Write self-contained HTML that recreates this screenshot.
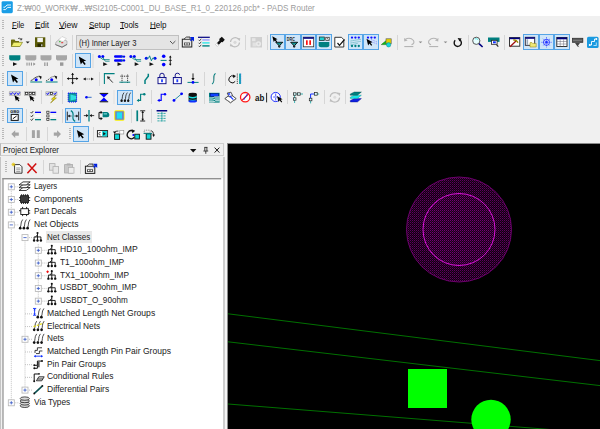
<!DOCTYPE html><html><head><meta charset="utf-8"><title>PADS Router</title><style>
*{margin:0;padding:0;box-sizing:border-box}
html,body{width:600px;height:429px;overflow:hidden;background:#f0f0f0}
body{position:relative;font-family:"Liberation Sans","NanumGothic",sans-serif;font-size:9px;color:#000}
.abs{position:absolute;white-space:nowrap}
.tx{transform-origin:0 50%;line-height:12px;height:12px}
#title{left:0;top:0;width:600px;height:16px;background:#fff}
.ti{font-size:9.2px;color:#9c9c9c}
.mn{font-size:9.2px;color:#111}
.mn u{text-decoration:underline;text-underline-offset:0.4px;text-decoration-thickness:0.7px}
.sel{background:#cfe5f8;border:1px solid #55a4e6}
.sep{width:1px;background:#d6d6d6}
.grip{width:2px;background-image:repeating-linear-gradient(#b8b8b8 0 1px,transparent 1px 2px)}
#combo{left:76px;top:35px;width:103px;height:15px;background:#e4e4e4;border:1px solid #c0c0c0}
.cb{font-size:8.8px;color:#222}
#pe-head{left:0;top:143px;width:224px;height:13px;border:1px solid #cfcfcf;border-left-color:#b8b8b8;background:#f0f0f0}
.ph{font-size:9px;color:#222}
#tree{left:3px;top:178px;width:220px;height:260px;background:#fff}
#lstrip{left:0;top:157px;width:1px;height:280px;background:#c4c4c4}
#rstrip{left:223px;top:157px;width:2px;height:280px;background:#cdcdcd}
.t{font-size:9.4px;color:#222}
#canvas{left:227px;top:143px;width:380px;height:300px;background:#000;border-left:1px solid #8a8a8a;border-top:1px solid #8a8a8a}
#split{left:225px;top:143px;width:2px;height:290px;background:#f4f4f4}
svg{position:absolute;left:0;top:0;overflow:visible}
</style></head><body>
<div id="title" class="abs"></div>
<span id="ti" class="abs tx ti" style="left:16.5px;top:2.30px;transform:scaleX(0.8774)">Z:₩00_WORK₩...₩SI2105-C0001_DU_BASE_R1_0_220126.pcb* - PADS Router</span>
<span id="m0" class="abs tx mn" style="left:12.2px;top:18.60px;transform:scaleX(0.8362)"><u>F</u>ile</span>
<span id="m1" class="abs tx mn" style="left:35.1px;top:18.60px;transform:scaleX(0.8891)"><u>E</u>dit</span>
<span id="m2" class="abs tx mn" style="left:59.4px;top:18.60px;transform:scaleX(0.9410)"><u>V</u>iew</span>
<span id="m3" class="abs tx mn" style="left:88.5px;top:18.60px;transform:scaleX(0.8739)"><u>S</u>etup</span>
<span id="m4" class="abs tx mn" style="left:120px;top:18.60px;transform:scaleX(0.8670)"><u>T</u>ools</span>
<span id="m5" class="abs tx mn" style="left:150px;top:18.60px;transform:scaleX(0.8727)"><u>H</u>elp</span>
<div class="abs sel" style="left:270px;top:34px;width:15px;height:16px"></div>
<div class="abs sel" style="left:285px;top:34px;width:16px;height:16px"></div>
<div class="abs sel" style="left:301px;top:34px;width:15px;height:16px"></div>
<div class="abs sel" style="left:316px;top:34px;width:16px;height:16px"></div>
<div class="abs sel" style="left:348px;top:34px;width:15px;height:16px"></div>
<div class="abs sel" style="left:363px;top:34px;width:16px;height:16px"></div>
<div class="abs sel" style="left:523px;top:34px;width:16px;height:16px"></div>
<div class="abs sel" style="left:539px;top:34px;width:15px;height:16px"></div>
<div class="abs sel" style="left:554px;top:34px;width:16px;height:16px"></div>
<div class="abs sel" style="left:75px;top:53px;width:16px;height:15px"></div>
<div class="abs sel" style="left:7px;top:71px;width:16px;height:15px"></div>
<div class="abs sel" style="left:117px;top:90px;width:16px;height:15px"></div>
<div class="abs sel" style="left:7px;top:108px;width:16px;height:15px"></div>
<div class="abs sel" style="left:65px;top:108px;width:16px;height:15px"></div>
<div class="abs sel" style="left:73px;top:126px;width:16px;height:16px"></div>
<div class="abs sep" style="left:50.0px;top:35px;height:15px"></div>
<div class="abs sep" style="left:71.5px;top:35px;height:15px"></div>
<div class="abs sep" style="left:245.0px;top:35px;height:15px"></div>
<div class="abs sep" style="left:266.5px;top:35px;height:15px"></div>
<div class="abs sep" style="left:397.0px;top:35px;height:15px"></div>
<div class="abs sep" style="left:467.5px;top:35px;height:15px"></div>
<div class="abs sep" style="left:504.0px;top:35px;height:15px"></div>
<div class="abs sep" style="left:72.0px;top:54px;height:14px"></div>
<div class="abs sep" style="left:25.5px;top:72px;height:14px"></div>
<div class="abs sep" style="left:62.0px;top:72px;height:14px"></div>
<div class="abs sep" style="left:98.5px;top:72px;height:14px"></div>
<div class="abs sep" style="left:135.5px;top:72px;height:14px"></div>
<div class="abs sep" style="left:203.5px;top:72px;height:14px"></div>
<div class="abs sep" style="left:224.5px;top:72px;height:14px"></div>
<div class="abs sep" style="left:40.5px;top:90px;height:14px"></div>
<div class="abs sep" style="left:62.0px;top:90px;height:14px"></div>
<div class="abs sep" style="left:150.5px;top:90px;height:14px"></div>
<div class="abs sep" style="left:203.5px;top:90px;height:14px"></div>
<div class="abs sep" style="left:287.0px;top:90px;height:14px"></div>
<div class="abs sep" style="left:324.0px;top:90px;height:14px"></div>
<div class="abs sep" style="left:345.0px;top:90px;height:14px"></div>
<div class="abs sep" style="left:25.5px;top:109px;height:14px"></div>
<div class="abs sep" style="left:61.5px;top:109px;height:14px"></div>
<div class="abs sep" style="left:130.5px;top:109px;height:14px"></div>
<div class="abs sep" style="left:151.0px;top:109px;height:14px"></div>
<div class="abs sep" style="left:25.5px;top:127px;height:14px"></div>
<div class="abs sep" style="left:46.5px;top:127px;height:14px"></div>
<div class="abs sep" style="left:92.5px;top:127px;height:14px"></div>
<div class="abs sep" style="left:43.0px;top:160px;height:14px"></div>
<div class="abs sep" style="left:80.0px;top:160px;height:14px"></div>
<div class="abs grip" style="left:2px;top:20px;height:9px"></div>
<div class="abs grip" style="left:2px;top:37px;height:11px"></div>
<div class="abs grip" style="left:2px;top:55px;height:11px"></div>
<div class="abs grip" style="left:2px;top:73px;height:11px"></div>
<div class="abs grip" style="left:2px;top:91px;height:11px"></div>
<div class="abs grip" style="left:2px;top:110px;height:11px"></div>
<div class="abs grip" style="left:2px;top:128px;height:11px"></div>
<div class="abs grip" style="left:69px;top:128px;height:11px"></div>
<div class="abs grip" style="left:5px;top:161px;height:12px"></div>
<div id="combo" class="abs"></div>
<span id="cb" class="abs tx cb" style="left:79px;top:36.80px;transform:scaleX(0.8647)">(H) Inner Layer 3</span>
<div id="pe-head" class="abs"></div>
<span id="ph" class="abs tx ph" style="left:3px;top:144.10px;transform:scaleX(0.8746)">Project Explorer</span>
<div id="tree" class="abs"></div><div id="lstrip" class="abs"></div><div id="rstrip" class="abs"></div>
<div id="split" class="abs"></div>
<div id="canvas" class="abs"></div>
<div class="abs" style="left:46px;top:231px;width:46px;height:12px;background:#e9e9e9"></div>
<span id="t0" class="abs tx t" style="left:33.8px;top:179.80px;transform:scaleX(0.8244)">Layers</span>
<span id="t1" class="abs tx t" style="left:33.8px;top:192.51px;transform:scaleX(0.9162)">Components</span>
<span id="t2" class="abs tx t" style="left:33.8px;top:205.21px;transform:scaleX(0.8758)">Part Decals</span>
<span id="t3" class="abs tx t" style="left:33.8px;top:217.92px;transform:scaleX(0.9074)">Net Objects</span>
<span id="t4" class="abs tx t" style="left:47.3px;top:230.62px;transform:scaleX(0.8547)">Net Classes</span>
<span id="t5" class="abs tx t" style="left:60.3px;top:243.33px;transform:scaleX(0.9146)">HD10_100ohm_IMP</span>
<span id="t6" class="abs tx t" style="left:60.3px;top:256.04px;transform:scaleX(0.8926)">T1_100ohm_IMP</span>
<span id="t7" class="abs tx t" style="left:60.3px;top:268.74px;transform:scaleX(0.8820)">TX1_100ohm_IMP</span>
<span id="t8" class="abs tx t" style="left:60.3px;top:281.45px;transform:scaleX(0.8761)">USBDT_90ohm_IMP</span>
<span id="t9" class="abs tx t" style="left:60.3px;top:294.15px;transform:scaleX(0.8660)">USBDT_O_90ohm</span>
<span id="t10" class="abs tx t" style="left:47.3px;top:306.86px;transform:scaleX(0.9187)">Matched Length Net Groups</span>
<span id="t11" class="abs tx t" style="left:47.3px;top:319.57px;transform:scaleX(0.8878)">Electrical Nets</span>
<span id="t12" class="abs tx t" style="left:47.3px;top:332.27px;transform:scaleX(0.8791)">Nets</span>
<span id="t13" class="abs tx t" style="left:47.3px;top:344.98px;transform:scaleX(0.9113)">Matched Length Pin Pair Groups</span>
<span id="t14" class="abs tx t" style="left:47.3px;top:357.68px;transform:scaleX(0.8907)">Pin Pair Groups</span>
<span id="t15" class="abs tx t" style="left:47.3px;top:370.39px;transform:scaleX(0.9043)">Conditional Rules</span>
<span id="t16" class="abs tx t" style="left:47.3px;top:383.10px;transform:scaleX(0.9066)">Differential Pairs</span>
<span id="t17" class="abs tx t" style="left:33.8px;top:395.80px;transform:scaleX(0.8866)">Via Types</span>
<svg width="600" height="429" viewBox="0 0 600 429">
<defs><clipPath id="cv"><rect x="228" y="144" width="372" height="285"/></clipPath><pattern id="chk" width="2" height="2" patternUnits="userSpaceOnUse"><rect width="2" height="2" fill="#100010"/><rect width="1" height="1" fill="#600060"/><rect x="1" y="1" width="1" height="1" fill="#380038"/></pattern><pattern id="chk2" width="2" height="2" patternUnits="userSpaceOnUse"><rect width="2" height="2" fill="#160016"/><rect width="1" height="1" fill="#740074"/><rect x="1" y="1" width="1" height="1" fill="#480048"/></pattern></defs>
<g clip-path="url(#cv)">
<circle cx="459" cy="229.5" r="52.5" fill="url(#chk)" stroke="#800080" stroke-width="0.8"/>
<circle cx="459" cy="229.5" r="36" fill="url(#chk2)" stroke="#d614d6" stroke-width="1"/>
<line x1="228" y1="313.8" x2="600" y2="360.6" stroke="#007000" stroke-width="1"/>
<line x1="228" y1="341.8" x2="600" y2="385.6" stroke="#007000" stroke-width="1"/>
<line x1="228" y1="404" x2="560" y2="430.3" stroke="#007000" stroke-width="1"/>
<rect x="408" y="369" width="39" height="39" fill="#00ff00"/>
<circle cx="491" cy="419.5" r="19.7" fill="#00ff00"/>
</g>
<rect x="1.6" y="1.2" width="11.2" height="12" fill="#1b9ee6" rx="1.4"/>
<path d="M3.4 9.6 L5.6 9.6 L7.6 7.4 L11 7.4 M3.4 7.2 L5 7.2 L7 5 L11 5" fill="none" stroke="#fff" stroke-width="0.9" />
<path d="M11 40 L11 46.5 L19 46.5 L19 41 L15.5 41 L14.5 39.5 L11.5 39.5Z" fill="#6e6e10" stroke="none" stroke-width="1" />
<path d="M11.3 46.5 L13.5 42.3 L22.5 42.3 L20 46.5Z" fill="#f0f070" stroke="#6e6e10" stroke-width="0.6" />
<path d="M18 38.5 Q20 37.5 21.5 39.5 M21.8 38 L21.6 40 L19.8 39.6" fill="none" stroke="#222" stroke-width="0.7" />
<path d="M25.7 41.6 L29.7 41.6 L27.7 43.6Z" fill="#222" stroke="none" stroke-width="1" />
<rect x="35" y="37.3" width="10.3" height="9.8" fill="#5c5c08" />
<rect x="37.3" y="37.8" width="5.6" height="4.3" fill="#f4f4f4" />
<rect x="37.5" y="43.6" width="5.2" height="3.3" fill="#2a2a00" />
<rect x="41.2" y="44.3" width="1.2" height="2" fill="#e0e0e0" />
<path d="M56 42 L60.5 38.5 L67 41 L67 44.5 L62 47.3 L55.3 44.5Z" fill="#dedede" stroke="#8a8a8a" stroke-width="0.5" />
<path d="M58.5 40 L62 36.5 L66.3 38.5 L63 41.8Z" fill="#ffffff" stroke="#aaa" stroke-width="0.4" />
<path d="M55.5 44.6 L62 47.2 L67 44.4" fill="none" stroke="#666" stroke-width="0.9" />
<rect x="59.2" y="41.2" width="1.3" height="1" fill="#00b000" />
<rect x="61.2" y="42.2" width="2" height="1" fill="#e03030" />
<path d="M170 41 L172.7 43.7 L175.4 41" fill="none" stroke="#444" stroke-width="0.9" />
<rect x="182.3" y="39.2" width="9.5" height="7.8" fill="#e8e8e8" stroke="#222" stroke-width="1"/>
<path d="M184 39 L186.5 37 L190 37 L190 39" fill="#d0d0d0" stroke="#222" stroke-width="0.8" />
<rect x="184" y="42.5" width="6" height="3" fill="#555" />
<rect x="185" y="43.3" width="1.5" height="1.3" fill="#fff" />
<rect x="187.5" y="43.3" width="1.5" height="1.3" fill="#fff" />
<path d="M190 37 L194 37 L194 41.5 L192.5 40 L191 41.3 L190 40.3 L191.4 39Z" fill="#0020e0" stroke="none" stroke-width="1" />
<rect x="198" y="36.7" width="11.8" height="1.2" fill="#000080" />
<rect x="202.3" y="39.2" width="7.3" height="1.4" fill="#9aa0ff" />
<path d="M198.6 39.800000000000004 L199.6 40.800000000000004 L201.2 38.800000000000004" fill="none" stroke="#222" stroke-width="0.8" />
<rect x="202.3" y="42.2" width="7.3" height="1.4" fill="#30e8e8" />
<path d="M198.6 42.800000000000004 L199.6 43.800000000000004 L201.2 41.800000000000004" fill="none" stroke="#222" stroke-width="0.8" />
<rect x="202.3" y="45.2" width="7.3" height="1.4" fill="#008080" />
<path d="M198.6 45.800000000000004 L199.6 46.800000000000004 L201.2 44.800000000000004" fill="none" stroke="#222" stroke-width="0.8" />
<path d="M217 43 L219.6 40.2 L219.2 39 L221.8 36.8 L224.8 39.8 L222.6 42.2 L221.4 41.9 L218.8 44.8Z" fill="#111" stroke="none" stroke-width="1" />
<path d="M216.6 43.4 L218.6 45.2 L217.4 46.4 L215.4 44.6Z" fill="#fff" stroke="#999" stroke-width="0.4" />
<path d="M230.5 42 A4.6 4.6 0 0 1 238.5 39.2 M239.5 42.5 A4.6 4.6 0 0 1 231.5 45.3" fill="none" stroke="#bdbdbd" stroke-width="1.2" />
<path d="M237 38 L240.3 38.3 L239.5 41.3Z" fill="#bdbdbd" stroke="none" stroke-width="1" />
<path d="M233 46.5 L229.8 46.2 L230.6 43.2Z" fill="#bdbdbd" stroke="none" stroke-width="1" />
<circle cx="235" cy="42.3" r="1.6" fill="#d8d8d8" stroke="none" stroke-width="1"/>
<rect x="250.5" y="37" width="11.5" height="10.5" fill="#cfcfcf" />
<rect x="252" y="38.2" width="3.5" height="3" fill="#e6e6e6" />
<rect x="252.5" y="42.5" width="4" height="4" fill="#e2e2e2" />
<circle cx="258.5" cy="43.8" r="2.6" fill="#e9e9e9" stroke="none" stroke-width="1"/>
<circle cx="258.5" cy="43.8" r="1" fill="#cfcfcf" stroke="none" stroke-width="1"/>
<path d="M0.00 0.00 L0.00 5.89 L1.43 4.59 L2.48 6.82 L3.47 6.32 L2.42 4.22 L4.34 4.22Z" fill="#000" stroke="none" stroke-width="1" transform="translate(272.3 36.3) rotate(-14)"/>
<path d="M275.8 42.3 L282.8 42.3 L279.90000000000003 45.275999999999996 L279.90000000000003 47.099999999999994 L278.7 47.099999999999994 L278.7 45.275999999999996Z" fill="#30a0a0" stroke="#111" stroke-width="1.0" />
<line x1="277.0" y1="43.3" x2="281.6" y2="43.3" stroke="#008080" stroke-width="0.9" />
<text x="286.8" y="40.8" font-family="Liberation Sans,sans-serif" font-size="4.6" font-weight="bold" fill="#222" textLength="8" lengthAdjust="spacingAndGlyphs">DRC</text>
<path d="M290.7 42.3 L297.7 42.3 L294.8 45.275999999999996 L294.8 47.099999999999994 L293.59999999999997 47.099999999999994 L293.59999999999997 45.275999999999996Z" fill="#30a0a0" stroke="#111" stroke-width="1.0" />
<line x1="291.9" y1="43.3" x2="296.5" y2="43.3" stroke="#008080" stroke-width="0.9" />
<rect x="303.3" y="37.2" width="10.4" height="9.6" fill="#fff" stroke="#333" stroke-width="0.8"/>
<rect x="303.3" y="37.2" width="10.4" height="1.6" fill="#000080" />
<rect x="306" y="40.3" width="1.7" height="4.6" fill="#ff1010" />
<rect x="309.3" y="40.3" width="1.7" height="4.6" fill="#ff1010" />
<path d="M318.7 42 L329.3 42 L329.3 45.2 Q329.3 47.3 327 47.3 L321 47.3 Q318.7 47.3 318.7 45.2Z" fill="#008080" stroke="none" stroke-width="1" />
<rect x="319.3" y="37" width="5" height="3.6" fill="#20d0d0" stroke="#222" stroke-width="0.7"/>
<rect x="325.8" y="37.3" width="3.4" height="3" fill="#fff" stroke="#222" stroke-width="0.7"/>
<path d="M327 38 L328.2 39.6" fill="none" stroke="#222" stroke-width="0.7" />
<path d="M334.8 37.3 L341.5 37.3 L343.8 39.6 L343.8 47 L334.8 47Z" fill="#fff" stroke="#222" stroke-width="0.9" />
<path d="M337.5 43 L339.5 45.3 L344.5 39.5" fill="none" stroke="#111" stroke-width="1.2" />
<circle cx="352.0" cy="37.6" r="1.15" fill="#1010ff" stroke="none" stroke-width="1"/>
<circle cx="352.0" cy="46" r="1.15" fill="#008080" stroke="none" stroke-width="1"/>
<circle cx="355.4" cy="37.6" r="1.15" fill="#1010ff" stroke="none" stroke-width="1"/>
<circle cx="355.4" cy="46" r="1.15" fill="#008080" stroke="none" stroke-width="1"/>
<circle cx="358.8" cy="37.6" r="1.15" fill="#1010ff" stroke="none" stroke-width="1"/>
<circle cx="358.8" cy="46" r="1.15" fill="#008080" stroke="none" stroke-width="1"/>
<path d="M350.5 41 L361 39.3 M350.5 43 L361 41.3 M350.5 45 L358 43.3" fill="none" stroke="#30a0a0" stroke-width="0.7" stroke-dasharray="1.2 0.8"/>
<circle cx="368.0" cy="37.6" r="1.15" fill="#1010ff" stroke="none" stroke-width="1"/>
<circle cx="371.4" cy="37.6" r="1.15" fill="#1010ff" stroke="none" stroke-width="1"/>
<circle cx="374.8" cy="37.6" r="1.15" fill="#1010ff" stroke="none" stroke-width="1"/>
<path d="M371 39.5 L377 42 M371 41.5 L377 44" fill="none" stroke="#6060ff" stroke-width="0.6" stroke-dasharray="1 0.8"/>
<path d="M0.00 0.00 L0.00 6.84 L1.66 5.33 L2.88 7.92 L4.03 7.34 L2.81 4.90 L5.04 4.90Z" fill="#000" stroke="none" stroke-width="1" transform="translate(366.5 38.8) rotate(-14)"/>
<path d="M381.3 44.6 L386.6 40.2 L386.6 44.6Z" fill="#10c010" stroke="#106010" stroke-width="0.5" />
<rect x="386" y="38.8" width="5.2" height="5" fill="#e0d000" stroke="#555" stroke-width="0.6"/>
<circle cx="388.6" cy="44.8" r="2.2" fill="#10d8d8" stroke="#088" stroke-width="0.5"/>
<path d="M405 39.5 Q410 36.5 413.5 40.5 Q415 43.5 411.5 44.8" fill="none" stroke="#b4b4b4" stroke-width="1.1" />
<path d="M404 38 L404.3 41.6 L407.6 40.6Z" fill="#b4b4b4" stroke="none" stroke-width="1" />
<rect x="404.3" y="46" width="9" height="1.1" fill="#b4b4b4" />
<path d="M418.7 41.5 L422.3 41.5 L420.5 43.3Z" fill="#8a8a8a" stroke="none" stroke-width="1" />
<path d="M437.5 39.5 Q432.5 36.5 429 40.5 Q427.5 43.5 431 44.8" fill="none" stroke="#b4b4b4" stroke-width="1.1" />
<path d="M438.5 38 L438.2 41.6 L434.9 40.6Z" fill="#b4b4b4" stroke="none" stroke-width="1" />
<rect x="429.2" y="46" width="9" height="1.1" fill="#b4b4b4" />
<path d="M443.7 41.5 L447.3 41.5 L445.5 43.3Z" fill="#8a8a8a" stroke="none" stroke-width="1" />
<path d="M455.2 40.3 A3.6 3.6 0 1 0 460 40" fill="none" stroke="#111" stroke-width="1.4" />
<path d="M457.6 37.9 L461.6 38.4 L459.6 41.6Z" fill="#111" stroke="none" stroke-width="1" />
<circle cx="476.3" cy="40.8" r="3.6" fill="#e8ffff" stroke="#444" stroke-width="0.9"/>
<path d="M475 38.8 Q477 38.2 478.2 39.8" fill="none" stroke="#40e0e0" stroke-width="0.8" />
<line x1="479" y1="43.6" x2="482.6" y2="47" stroke="#000080" stroke-width="1.6" />
<rect x="488" y="37.5" width="11.5" height="4.4" fill="#008080" />
<rect x="491.5" y="40.3" width="5.6" height="4" fill="#fff" stroke="#222" stroke-width="0.8"/>
<rect x="493" y="41.3" width="2.8" height="2" fill="#1030ff" />
<line x1="496.5" y1="44.6" x2="498.3" y2="46.6" stroke="#222" stroke-width="1.1" />
<rect x="509.5" y="37.6" width="10.3" height="8.6" fill="#fff" stroke="#222" stroke-width="0.9"/>
<rect x="509.5" y="37.6" width="10.3" height="1.6" fill="#000080" />
<line x1="510" y1="46.8" x2="516" y2="41" stroke="#a01010" stroke-width="1.3" />
<path d="M513.2 40.2 Q516 39.2 518 42.6" fill="none" stroke="#9a8a00" stroke-width="1.4" />
<rect x="525.3" y="37.3" width="9.4" height="8" fill="#fff" stroke="#223" stroke-width="0.9"/>
<rect x="525.3" y="37.3" width="9.4" height="1.5" fill="#000080" />
<rect x="526.5" y="39.3" width="1.6" height="5.5" fill="#9ab" />
<path d="M530 42.6 L532 42.6 L532.6 43.4 L536.2 43.4 L536.2 47 L530 47Z" fill="#f0e878" stroke="#8a8000" stroke-width="0.5" />
<circle cx="546.5" cy="42.3" r="3.1" fill="#d8e4ff" stroke="#2030ff" stroke-width="0.8"/>
<path d="M546.5 37.2 L546.5 47.4 M541.4 42.3 L551.6 42.3 M543 38.8 L550 45.8 M550 38.8 L543 45.8" fill="none" stroke="#2030ff" stroke-width="0.7" stroke-dasharray="1 0.6"/>
<circle cx="546.5" cy="42.3" r="1.2" fill="#2030ff" stroke="none" stroke-width="1"/>
<rect x="556.8" y="37.5" width="10.2" height="9" fill="#fff" stroke="#222" stroke-width="0.9"/>
<rect x="556.8" y="37.5" width="10.2" height="1.8" fill="#000080" />
<path d="M556.8 41.5 L567 41.5 M556.8 44 L567 44 M560.2 39.3 L560.2 46.5 M563.6 39.3 L563.6 46.5" fill="none" stroke="#667" stroke-width="0.5" />
<rect x="572.3" y="38.2" width="10.6" height="4.2" fill="#555" stroke="#222" stroke-width="0.6"/>
<path d="M573.5 40.3 L582 40.3" fill="none" stroke="#ccc" stroke-width="0.7" stroke-dasharray="1 1"/>
<path d="M575 43 L580 43 L578 45.8 L579.5 47.2 L577.5 46.5Z" fill="#444" stroke="none" stroke-width="1" />
<rect x="587" y="36.8" width="11.6" height="11.2" fill="#1a9ae0" rx="1.6"/>
<path d="M589.5 45 L591.5 45 L591.5 41.5 L594.5 41.5 L594.5 39 L596.5 39" fill="none" stroke="#fff" stroke-width="0.9" />
<circle cx="589.7" cy="45" r="0.9" fill="#fff" stroke="none" stroke-width="1"/>
<circle cx="596.4" cy="39" r="0.9" fill="#fff" stroke="none" stroke-width="1"/>
<path d="M593.5 45.5 L596.5 45.5 M596.3 42.5 L596.3 45.5" fill="none" stroke="#d0f0ff" stroke-width="0.8" />
<path d="M9.2 55.2 L20.4 55.2 L20.4 59.3 L19 60.6 L10.6 60.6 L9.2 59.3Z" fill="#008080" stroke="none" stroke-width="1" />
<path d="M13 62.2 L17.3 64.10000000000001 L13 66.0Z" fill="#111" stroke="none" stroke-width="1" />
<path d="M25.3 55.2 L36.3 55.2 L36.3 59.3 L34.9 60.6 L26.7 60.6 L25.3 59.3Z" fill="#a6a6a6" stroke="none" stroke-width="1" />
<path d="M40.5 55.2 L51.5 55.2 L51.5 59.3 L50.1 60.6 L41.9 60.6 L40.5 59.3Z" fill="#a6a6a6" stroke="none" stroke-width="1" />
<path d="M56 55.2 L67 55.2 L67 59.3 L65.6 60.6 L57.4 60.6 L56 59.3Z" fill="#a6a6a6" stroke="none" stroke-width="1" />
<path d="M27.0 62.6 L27.0 65.6" fill="none" stroke="#8a8a8a" stroke-width="1" />
<path d="M29.2 62.6 L29.2 65.6" fill="none" stroke="#8a8a8a" stroke-width="1" />
<path d="M31.4 62.6 L31.4 65.6" fill="none" stroke="#8a8a8a" stroke-width="1" />
<path d="M33.3 62.4 L35.5 64.1 L33.3 65.8Z" fill="#8a8a8a" stroke="none" stroke-width="1" />
<rect x="44.3" y="62.4" width="1.1" height="3.6" fill="#8a8a8a" />
<rect x="46.7" y="62.4" width="1.1" height="3.6" fill="#8a8a8a" />
<rect x="60" y="62.4" width="3.4" height="3.4" fill="#9a9a9a" />
<path d="M0.00 0.00 L0.00 8.36 L2.02 6.51 L3.52 9.68 L4.93 8.98 L3.43 5.98 L6.16 5.98Z" fill="#000" stroke="none" stroke-width="1" transform="translate(78.8 56.4) rotate(-14)"/>
<line x1="93" y1="54" x2="93" y2="68" stroke="#d8d8d8" stroke-width="1" />
<circle cx="99.4" cy="56.4" r="1.5" fill="#0000ff" stroke="none" stroke-width="1"/>
<circle cx="102.8" cy="56.4" r="1.5" fill="#0000ff" stroke="none" stroke-width="1"/>
<path d="M99.5 57 L103 59.6 L109.6 59.6 M102.6 57 L105.3 61.2 L109.6 61.2" fill="none" stroke="#008080" stroke-width="0.8" />
<path d="M103.2 62.3 L107.5 64.2 L103.2 66.1Z" fill="#111" stroke="none" stroke-width="1" />
<circle cx="130.9" cy="56.4" r="1.5" fill="#0000ff" stroke="none" stroke-width="1"/>
<circle cx="134.3" cy="56.4" r="1.5" fill="#0000ff" stroke="none" stroke-width="1"/>
<path d="M131.0 57 L134.5 59.6 L141.1 59.6 M134.1 57 L136.8 61.2 L141.1 61.2" fill="none" stroke="#008080" stroke-width="0.8" />
<path d="M134.7 62.3 L139.0 64.2 L134.7 66.1Z" fill="#111" stroke="none" stroke-width="1" />
<rect x="114" y="55.3" width="9" height="2.5" fill="#0000ff" rx="1.2"/>
<rect x="114" y="59.2" width="9" height="2.5" fill="#0000ff" rx="1.2"/>
<rect x="121.5" y="56" width="3" height="1.1" fill="#008080" />
<rect x="121.5" y="59.9" width="3" height="1.1" fill="#008080" />
<circle cx="124" cy="56.6" r="1.2" fill="#0000ff" stroke="none" stroke-width="1"/>
<circle cx="124" cy="60.4" r="1.2" fill="#0000ff" stroke="none" stroke-width="1"/>
<path d="M117.5 62.3 L121.8 64.2 L117.5 66.1Z" fill="#111" stroke="none" stroke-width="1" />
<circle cx="146.3" cy="58.2" r="1.5" fill="#0000ff" stroke="none" stroke-width="1"/>
<circle cx="155" cy="58.2" r="1.5" fill="#0000ff" stroke="none" stroke-width="1"/>
<path d="M146.2 58.2 L148.6 58.2 L149.6 55.8 L151.4 60.8 L152.6 58.2 L155 58.2" fill="none" stroke="#008080" stroke-width="0.9" />
<path d="M149.5 62.3 L153.8 64.2 L149.5 66.1Z" fill="#111" stroke="none" stroke-width="1" />
<circle cx="163.7" cy="56.3" r="1.8" fill="#0000ff" stroke="none" stroke-width="1"/>
<circle cx="163.7" cy="64.6" r="1.8" fill="#0000ff" stroke="none" stroke-width="1"/>
<line x1="160.6" y1="60.4" x2="166.6" y2="60.4" stroke="#008080" stroke-width="1" />
<line x1="170.3" y1="56.5" x2="170.3" y2="65" stroke="#111" stroke-width="0.9" />
<path d="M169 57.6 L170.3 55.6 L171.6 57.6Z M169 63.8 L170.3 65.8 L171.6 63.8Z" fill="#111" stroke="none" stroke-width="1" />
<line x1="168.8" y1="60.4" x2="171.8" y2="60.4" stroke="#111" stroke-width="0.8" />
<path d="M0.00 0.00 L0.00 8.36 L2.02 6.51 L3.52 9.68 L4.93 8.98 L3.43 5.98 L6.16 5.98Z" fill="#000" stroke="none" stroke-width="1" transform="translate(11 74.4) rotate(-14)"/>
<line x1="30.3" y1="82" x2="42.1" y2="82" stroke="#008080" stroke-width="1" />
<path d="M30.7 80.6 C33.3 80.4 34.5 76.4 38.7 76.6" fill="none" stroke="#222" stroke-width="0.8" />
<circle cx="36.2" cy="79.8" r="1.5" fill="#0000ff" stroke="none" stroke-width="1"/>
<path d="M38.5 75.6 L41.7 76.4 L40.9 79.4Z" fill="#111" stroke="none" stroke-width="1" />
<line x1="45.8" y1="82" x2="57.599999999999994" y2="82" stroke="#008080" stroke-width="1" />
<path d="M46.199999999999996 80.6 C48.8 80.4 50.0 76.4 54.199999999999996 76.6" fill="none" stroke="#222" stroke-width="0.8" stroke-dasharray="1.2 0.9"/>
<circle cx="51.699999999999996" cy="79.8" r="1.5" fill="#0000ff" stroke="none" stroke-width="1"/>
<path d="M54.0 75.6 L57.199999999999996 76.4 L56.4 79.4Z" fill="#111" stroke="none" stroke-width="1" />
<path d="M72.6 73.4 L72.6 83.8 M67.4 78.6 L77.8 78.6" fill="none" stroke="#111" stroke-width="0.9" />
<path d="M71.2 75 L72.6 72.8 L74 75Z M71.2 82.2 L72.6 84.4 L74 82.2Z M69 77.2 L66.8 78.6 L69 80Z M76.2 77.2 L78.4 78.6 L76.2 80Z" fill="#111" stroke="none" stroke-width="1" />
<path d="M85.5 79 L91.5 79" fill="none" stroke="#333" stroke-width="0.8" stroke-dasharray="1 0.8"/>
<path d="M85.8 77.4 L83 79 L85.8 80.6Z M91 77.4 L93.8 79 L91 80.6Z" fill="#111" stroke="none" stroke-width="1" />
<path d="M104.4 84 L104.4 73.6 L114.6 73.6" fill="none" stroke="#008080" stroke-width="1.1" />
<line x1="112.8" y1="82.6" x2="108" y2="77.4" stroke="#222" stroke-width="0.9" />
<path d="M107 76.3 L110.4 77 L107.8 79.6Z" fill="#222" stroke="none" stroke-width="1" />
<path d="M122 74.6 L122 83.4 M127.6 74.6 L127.6 83.4 M120.4 76.2 L129.4 76.2" fill="none" stroke="#222" stroke-width="0.9" stroke-dasharray="1 0.8"/>
<line x1="119.4" y1="82.2" x2="130.2" y2="82.2" stroke="#008080" stroke-width="1" />
<path d="M148.3 73.8 L148.3 76.2 L145 80.4 L145 84" fill="none" stroke="#008080" stroke-width="1.5" />
<rect x="158.0" y="77.5" width="8" height="6.2" fill="#fff" stroke="#000080" stroke-width="0.9"/>
<rect x="161.10000000000002" y="79.2" width="1.8" height="3" fill="#2040ff" />
<rect x="158.9" y="78.4" width="6.2" height="0.8" fill="#c8c8e8" />
<path d="M159.8 77.3 L159.8 75.4 Q159.8 73.2 162.0 73.2 Q164.20000000000002 73.2 164.20000000000002 75.4 L164.20000000000002 77.3" fill="none" stroke="#000080" stroke-width="0.9" />
<rect x="173.29999999999998" y="77.5" width="8" height="6.2" fill="#fff" stroke="#000080" stroke-width="0.9"/>
<rect x="176.4" y="79.2" width="1.8" height="3" fill="#2040ff" />
<rect x="174.2" y="78.4" width="6.2" height="0.8" fill="#c8c8e8" />
<path d="M175.2 77.3 L175.2 75.2 Q175.2 73.2 177.29999999999998 73.2 Q179.6 73.2 179.6 74.8" fill="none" stroke="#000080" stroke-width="0.9" />
<line x1="193" y1="73.4" x2="193" y2="79.5" stroke="#111" stroke-width="0.9" />
<path d="M191.4 78 L193 80.6 L194.6 78Z" fill="#111" stroke="none" stroke-width="1" />
<line x1="187.5" y1="82.4" x2="198.6" y2="82.4" stroke="#008080" stroke-width="1" />
<circle cx="193" cy="82.4" r="1.4" fill="#0000ff" stroke="none" stroke-width="1"/>
<path d="M215.6 73.6 Q213.6 74.5 213.8 78.6 Q214 83 212 84" fill="none" stroke="#008080" stroke-width="1.1" />
<path d="M214.6 75.5 L213.2 82" fill="none" stroke="#999" stroke-width="0.5" />
<path d="M234.2 76.4 A3.5 3.5 0 1 0 235.2 81.4" fill="none" stroke="#111" stroke-width="1.0" />
<path d="M232.8 74.4 L236 76 L233.4 78.2Z" fill="#111" stroke="none" stroke-width="1" />
<line x1="237.3" y1="73.6" x2="237.3" y2="84" stroke="#222" stroke-width="0.9" stroke-dasharray="1 0.9"/>
<rect x="239" y="73.6" width="2" height="10.4" fill="#20b0b0" />
<line x1="240.8" y1="73.6" x2="240.8" y2="84" stroke="#2050ff" stroke-width="0.6" stroke-dasharray="1 1"/>
<rect x="9.2" y="91.8" width="11.2" height="3.6" fill="#d4d4d4" stroke="#999" stroke-width="0.5"/>
<path d="M10.0 93.2 L11.0 94.6 L12.6 92.4" fill="none" stroke="#0000ff" stroke-width="0.9" />
<path d="M13.6 93.2 L14.6 94.6 L16.2 92.4" fill="none" stroke="#0000ff" stroke-width="0.9" />
<path d="M17.2 93.2 L18.2 94.6 L19.8 92.4" fill="none" stroke="#0000ff" stroke-width="0.9" />
<path d="M0.00 0.00 L0.00 6.08 L1.47 4.74 L2.56 7.04 L3.58 6.53 L2.50 4.35 L4.48 4.35Z" fill="#000" stroke="none" stroke-width="1" transform="translate(14.4 95.2) rotate(-14)"/>
<rect x="24.6" y="91.8" width="11.2" height="3.6" fill="#d4d4d4" stroke="#999" stroke-width="0.5"/>
<rect x="25.6" y="92.6" width="2.2" height="2" fill="#fff" stroke="#222" stroke-width="0.7"/>
<rect x="29.1" y="92.6" width="2.2" height="2" fill="#fff" stroke="#222" stroke-width="0.7"/>
<rect x="32.6" y="92.6" width="2.2" height="2" fill="#fff" stroke="#222" stroke-width="0.7"/>
<path d="M0.00 0.00 L0.00 6.08 L1.47 4.74 L2.56 7.04 L3.58 6.53 L2.50 4.35 L4.48 4.35Z" fill="#000" stroke="none" stroke-width="1" transform="translate(29.2 95.2) rotate(-14)"/>
<rect x="45.8" y="91.8" width="11.2" height="3.6" fill="#d4d4d4" stroke="#999" stroke-width="0.5"/>
<path d="M46.6 93.2 L47.6 94.6 L49.2 92.4 M53.8 93.2 L54.8 94.6 L56.4 92.4" fill="none" stroke="#0000ff" stroke-width="0.9" />
<rect x="50.3" y="92.6" width="2.2" height="2" fill="#fff" stroke="#222" stroke-width="0.7"/>
<path d="M56 95 L51.4 99.2 L53.6 99.2 L50.6 103 L56.4 98 L54 98Z" fill="#f4e800" stroke="#807000" stroke-width="0.5" />
<rect x="68.2" y="93" width="8.4" height="9" fill="#109898" stroke="#0000ff" stroke-width="1" stroke-dasharray="1.1 0.9"/>
<path d="M70.5 94.6 L76 96 L76 99.2 L70.5 100.6Z" fill="#30e0e0" stroke="none" stroke-width="1" />
<circle cx="86.5" cy="97.3" r="1.3" fill="#0000ff" stroke="none" stroke-width="1"/>
<line x1="87" y1="97.3" x2="91.6" y2="97.3" stroke="#2060c0" stroke-width="0.9" />
<path d="M99.8 93.8 L108 93.8 L103.9 97.5Z M99.8 101.4 L108 101.4 L103.9 97.5Z" fill="#0000ff" stroke="none" stroke-width="1" />
<line x1="99.6" y1="93.4" x2="108.2" y2="93.4" stroke="#111" stroke-width="1" />
<line x1="99.6" y1="101.8" x2="108.2" y2="101.8" stroke="#111" stroke-width="1" />
<line x1="114" y1="90" x2="114" y2="104" stroke="#e0e0e0" stroke-width="1" />
<path d="M124.0 92.6 Q122.3 95 122.39999999999999 96.8 Q122.39999999999999 98.8 121.6 100" fill="none" stroke="#111" stroke-width="0.75" />
<circle cx="121.6" cy="100.8" r="1.2" fill="#111" stroke="none" stroke-width="1"/>
<path d="M127.3 92.6 Q125.6 95 125.69999999999999 96.8 Q125.69999999999999 98.8 124.89999999999999 100" fill="none" stroke="#111" stroke-width="0.75" />
<circle cx="124.89999999999999" cy="100.8" r="1.2" fill="#111" stroke="none" stroke-width="1"/>
<path d="M130.6 92.6 Q128.89999999999998 95 129.0 96.8 Q129.0 98.8 128.2 100" fill="none" stroke="#111" stroke-width="0.75" />
<circle cx="128.2" cy="100.8" r="1.2" fill="#111" stroke="none" stroke-width="1"/>
<path d="M138 100.4 L140.6 100.4 L140.6 94.2 L144 94.2" fill="none" stroke="#008080" stroke-width="1.1" />
<circle cx="144.3" cy="94.2" r="1.2" fill="#008080" stroke="none" stroke-width="1"/>
<path d="M139 98.8 L136.6 100.4 L139 102Z" fill="#008080" stroke="none" stroke-width="1" />
<path d="M158.6 100.4 L161.2 100.4 L161.2 94.2 L164.6 94.2" fill="none" stroke="#0000ff" stroke-width="1.1" />
<circle cx="165" cy="94.2" r="1.2" fill="#0000ff" stroke="none" stroke-width="1"/>
<path d="M159.6 98.8 L157.2 100.4 L159.6 102Z" fill="#0000ff" stroke="none" stroke-width="1" />
<line x1="174" y1="100.3" x2="181.5" y2="93.9" stroke="#1080a0" stroke-width="0.9" />
<circle cx="174" cy="100.4" r="1.4" fill="#0000ff" stroke="none" stroke-width="1"/>
<circle cx="181.6" cy="93.8" r="1.4" fill="#0000ff" stroke="none" stroke-width="1"/>
<path d="M188.6 94 L196.8 94 L196.8 101 L188.6 101Z" fill="#111" stroke="none" stroke-width="1" />
<ellipse cx="192.7" cy="94" rx="4.1" ry="1.3" fill="#111"/>
<ellipse cx="192.7" cy="101.2" rx="4.3" ry="1.3" fill="#1030ff"/>
<path d="M188.6 96 Q192.7 97.8 196.8 96 L196.8 97.5 Q192.7 99.3 188.6 97.5Z" fill="#18e0e0" stroke="none" stroke-width="1" />
<path d="M188.8 99.6 Q192.7 101 196.6 99.6" fill="none" stroke="#18e0e0" stroke-width="0.6" />
<rect x="209" y="92.8" width="10.6" height="9.8" fill="#008080" />
<rect x="210.2" y="93.7" width="8.2" height="2.6" fill="#1040ff" stroke="#000080" stroke-width="0.5"/>
<path d="M209 98 L212 98 Q213.5 98 214.5 97 L219.6 97 M209 100 L212.5 100 Q214 100 215 99 L219.6 99 M209 101.8 L213 101.8 Q214.5 101.8 215.5 100.8 L219.6 100.8" fill="none" stroke="#ffffff" stroke-width="0.9" />
<path d="M224.8 98.6 L230.5 94.4 L236.2 98.6 L230.5 102.8Z" fill="#fff" stroke="#222" stroke-width="0.8" />
<path d="M227.2 93 L231 92.2 L232.6 95.6 L229 97Z" fill="#e8e8ff" stroke="#222" stroke-width="0.7" />
<path d="M229.6 96 L233.4 99.6" fill="none" stroke="#1030ff" stroke-width="1.1" />
<circle cx="229" cy="94" r="0.9" fill="#1030ff" stroke="none" stroke-width="1"/>
<path d="M226 99.4 L230.5 102.6 L235 99.4" fill="none" stroke="#888" stroke-width="0.6" />
<circle cx="245.2" cy="97.2" r="4.7" fill="#fff" stroke="#ff1818" stroke-width="1.3"/>
<line x1="241.8" y1="100.4" x2="248.6" y2="94" stroke="#ff1818" stroke-width="1.3" />
<line x1="243.6" y1="100" x2="247.6" y2="93.6" stroke="#1030ff" stroke-width="0.9" />
<text x="255" y="101" font-family="Liberation Sans,sans-serif" font-size="9.2" font-weight="bold" fill="#111" textLength="9.3" lengthAdjust="spacingAndGlyphs">ab</text>
<line x1="266.6" y1="92.8" x2="266.6" y2="102.4" stroke="#111" stroke-width="0.9" />
<circle cx="275.7" cy="97" r="4.6" fill="#fff" stroke="#2030ff" stroke-width="1"/>
<path d="M273.2 97 L277.5 97 M275.7 93.5 L275.7 96 M275.7 98 L275.7 100.5" fill="none" stroke="#2030ff" stroke-width="0.8" />
<path d="M0.00 0.00 L0.00 6.27 L1.52 4.88 L2.64 7.26 L3.70 6.73 L2.57 4.49 L4.62 4.49Z" fill="#000" stroke="none" stroke-width="1" transform="translate(277 96) rotate(-14)"/>
<path d="M293.4 94 L303 94 M294.6 94 L294.6 103" fill="none" stroke="#10a0a0" stroke-width="0.8" />
<rect x="293.4" y="92.8" width="2.6" height="2.4" fill="#dff" stroke="#222" stroke-width="0.7"/>
<rect x="297.6" y="92.8" width="2.6" height="2.4" fill="#dff" stroke="#222" stroke-width="0.7"/>
<rect x="293.4" y="97.8" width="2.6" height="2.4" fill="#dff" stroke="#222" stroke-width="0.7"/>
<path d="M310.6 99 L310.6 94 L314.6 94" fill="none" stroke="#1030ff" stroke-width="1" />
<path d="M317 94 L319.2 94 M310.6 101 L310.6 103.4" fill="none" stroke="#10a0a0" stroke-width="0.8" />
<rect x="314.4" y="92.6" width="2.8" height="2.6" fill="#dff" stroke="#222" stroke-width="0.7"/>
<rect x="309.3" y="98.2" width="2.6" height="2.6" fill="#dff" stroke="#222" stroke-width="0.7"/>
<path d="M330.2 97 A4.8 4.8 0 0 1 338.4 94 M339.6 97.6 A4.8 4.8 0 0 1 331.4 100.6" fill="none" stroke="#bdbdbd" stroke-width="1.2" />
<path d="M337 92.6 L340.4 93 L339.6 96.2Z" fill="#bdbdbd" stroke="none" stroke-width="1" />
<path d="M333 102 L329.6 101.6 L330.4 98.4Z" fill="#bdbdbd" stroke="none" stroke-width="1" />
<circle cx="334.8" cy="97.3" r="1.5" fill="#dcdcdc" stroke="none" stroke-width="1"/>
<path d="M350.3 100.5 L354.3 98.6 L361.4 98.6 L357.4 102 L350.3 102Z" fill="#1020e0" stroke="#001080" stroke-width="0.4" />
<path d="M350.3 97.2 L354.3 95.2 L361.4 95.2 L357.4 98.4 L350.3 98.4Z" fill="#18e8e8" stroke="#088" stroke-width="0.4" />
<path d="M350.3 94 L354.3 92 L361.4 92 L357.4 95.2 L350.3 95.2Z" fill="#008080" stroke="#044" stroke-width="0.4" />
<text x="10.3" y="113.2" font-family="Liberation Sans,sans-serif" font-size="4.4" font-weight="bold" fill="#222" textLength="9" lengthAdjust="spacingAndGlyphs">080</text>
<rect x="11.2" y="114.4" width="7" height="6" fill="#fff" stroke="#111" stroke-width="1"/>
<line x1="12.8" y1="118.8" x2="16.6" y2="116" stroke="#111" stroke-width="1" />
<rect x="35" y="111.7" width="6" height="1.3" fill="#0000ff" />
<path d="M30.6 112.1 L31.6 113.2 L33.2 111.1" fill="none" stroke="#111" stroke-width="0.8" />
<rect x="46.8" y="111.2" width="2.2" height="2.1" fill="#fff" stroke="#222" stroke-width="0.7"/>
<rect x="50.4" y="111.7" width="5.8" height="1.3" fill="#0000ff" />
<rect x="35" y="115.4" width="6" height="1.3" fill="#fff" />
<path d="M30.6 115.8 L31.6 116.9 L33.2 114.8" fill="none" stroke="#111" stroke-width="0.8" />
<rect x="46.8" y="114.9" width="2.2" height="2.1" fill="#fff" stroke="#222" stroke-width="0.7"/>
<rect x="50.4" y="115.4" width="5.8" height="1.3" fill="#fff" />
<rect x="35" y="119.0" width="6" height="1.3" fill="#008080" />
<path d="M30.6 119.39999999999999 L31.6 120.5 L33.2 118.39999999999999" fill="none" stroke="#111" stroke-width="0.8" />
<rect x="46.8" y="118.5" width="2.2" height="2.1" fill="#fff" stroke="#222" stroke-width="0.7"/>
<rect x="50.4" y="119.0" width="5.8" height="1.3" fill="#008080" />
<line x1="67.3" y1="111.6" x2="67.3" y2="120.4" stroke="#111" stroke-width="0.9" />
<line x1="78.7" y1="111.6" x2="78.7" y2="120.4" stroke="#111" stroke-width="0.9" />
<line x1="68" y1="116" x2="71.5" y2="116" stroke="#111" stroke-width="0.8" />
<line x1="74.5" y1="116" x2="78" y2="116" stroke="#111" stroke-width="0.8" />
<path d="M69.8 114.6 L68 116 L69.8 117.4Z M76.2 114.6 L78 116 L76.2 117.4Z" fill="#111" stroke="none" stroke-width="1" />
<path d="M70.8 110.6 Q73.6 112 73 116 Q72.4 120 75.2 121.4" fill="none" stroke="#008080" stroke-width="1.2" />
<line x1="89" y1="110" x2="89" y2="121.4" stroke="#008080" stroke-width="1.3" />
<line x1="83.8" y1="115.6" x2="87.4" y2="115.6" stroke="#111" stroke-width="0.8" />
<line x1="90.6" y1="115.6" x2="94.2" y2="115.6" stroke="#111" stroke-width="0.8" />
<path d="M86.2 114 L88.4 115.6 L86.2 117.2Z M91.8 114 L89.6 115.6 L91.8 117.2Z" fill="#111" stroke="none" stroke-width="1" />
<path d="M101.6 112.4 L99 112.4 L99 118.6 L101.6 118.6" fill="none" stroke="#111" stroke-width="1" />
<path d="M100.6 110.8 L102.8 112.4 L100.6 114Z M100.6 117 L102.8 118.6 L100.6 120.2Z" fill="#111" stroke="none" stroke-width="1" />
<path d="M102.6 112 L107.4 112 Q109.4 113 109.4 115 Q109.4 117.2 107 117.2 L102.6 117.2Z" fill="#008080" stroke="none" stroke-width="1" />
<rect x="103.6" y="113" width="3.4" height="1.6" fill="#60c0c0" />
<rect x="114.2" y="110.3" width="10.4" height="10.4" fill="#f8f000" rx="1.6"/>
<rect x="115.2" y="111.3" width="8.4" height="8.4" fill="#4060ff" />
<path d="M116 111.3 L116 119.7 M118 111.3 L118 119.7 M120 111.3 L120 119.7 M122 111.3 L122 119.7" fill="none" stroke="#f8f000" stroke-width="0.5" />
<rect x="116.8" y="112.4" width="5.2" height="6.2" fill="#18e0f8" />
<rect x="136.4" y="110.4" width="1.7" height="10.8" fill="#008080" />
<line x1="142.7" y1="111.4" x2="142.7" y2="120.4" stroke="#111" stroke-width="0.9" />
<line x1="140.2" y1="110.8" x2="145.2" y2="110.8" stroke="#111" stroke-width="0.9" />
<line x1="140.2" y1="121" x2="145.2" y2="121" stroke="#111" stroke-width="0.9" />
<path d="M141.4 113 L142.7 111 L144 113Z M141.4 118.8 L142.7 120.8 L144 118.8Z" fill="#111" stroke="none" stroke-width="1" />
<rect x="156.6" y="110" width="10.6" height="1.5" fill="#000080" />
<line x1="157.4" y1="113.4" x2="166.4" y2="113.4" stroke="#20a0a0" stroke-width="0.9" stroke-dasharray="2.2 0.8"/>
<line x1="157.4" y1="115.9" x2="166.4" y2="115.9" stroke="#20a0a0" stroke-width="0.9" stroke-dasharray="2.2 0.8"/>
<line x1="157.4" y1="118.4" x2="166.4" y2="118.4" stroke="#20a0a0" stroke-width="0.9" stroke-dasharray="2.2 0.8"/>
<line x1="157.4" y1="120.9" x2="166.4" y2="120.9" stroke="#20a0a0" stroke-width="0.9" stroke-dasharray="2.2 0.8"/>
<line x1="161.9" y1="112" x2="161.9" y2="121.4" stroke="#20a0a0" stroke-width="0.8" />
<path d="M11.3 134.1 L15.2 130.2 L15.2 132.4 L18.8 132.4 L18.8 135.8 L15.2 135.8 L15.2 138Z" fill="#a4a4a4" stroke="none" stroke-width="1" />
<rect x="31.9" y="130.2" width="3" height="7.8" fill="#a4a4a4" />
<rect x="36.8" y="130.2" width="3" height="7.8" fill="#a4a4a4" />
<path d="M61 134.1 L57.1 130.2 L57.1 132.4 L53.8 132.4 L53.8 135.8 L57.1 135.8 L57.1 138Z" fill="#a4a4a4" stroke="none" stroke-width="1" />
<path d="M0.00 0.00 L0.00 8.36 L2.02 6.51 L3.52 9.68 L4.93 8.98 L3.43 5.98 L6.16 5.98Z" fill="#000" stroke="none" stroke-width="1" transform="translate(76.8 130) rotate(-14)"/>
<rect x="97.4" y="130.6" width="10.2" height="6.2" fill="#fff" stroke="#111" stroke-width="0.9"/>
<rect x="102.2" y="131" width="5" height="5.4" fill="#10d8d8" />
<path d="M103.2 132 L105.8 133.7 L103.2 135.4Z" fill="#111" stroke="none" stroke-width="1" />
<path d="M100.6 132.4 Q98.8 132.2 98.9 133.7 Q98.8 135.2 100.6 135" fill="none" stroke="#111" stroke-width="0.7" />
<rect x="114.6" y="134" width="5" height="5.4" fill="#10d8d8" stroke="#111" stroke-width="0.9"/>
<rect x="119.8" y="130.3" width="4" height="3.7" fill="#fff" stroke="#888" stroke-width="0.6"/>
<path d="M118.4 131 Q115 130.6 114.6 133" fill="none" stroke="#111" stroke-width="0.8" />
<path d="M113 131.6 L114.6 133.8 L116 131.6Z" fill="#111" stroke="none" stroke-width="1" />
<path d="M133.2 131.2 A4 4 0 1 0 134.4 137.2" fill="none" stroke="#111" stroke-width="1.3" />
<path d="M131.6 129.2 L135.2 130.8 L132.4 133.2Z" fill="#111" stroke="none" stroke-width="1" />
<circle cx="133.4" cy="135" r="1.1" fill="#0000ff" stroke="none" stroke-width="1"/>
<rect x="134.8" y="134.2" width="4.6" height="4.8" fill="#10d8d8" stroke="#111" stroke-width="0.9"/>
<rect x="146.2" y="133.8" width="4.8" height="5.4" fill="#10d8d8" stroke="#111" stroke-width="0.9"/>
<rect x="144.2" y="130.2" width="6" height="3" fill="none" stroke="#555" stroke-width="0.6" stroke-dasharray="1 0.8"/>
<line x1="143.6" y1="133.4" x2="152" y2="133.4" stroke="#008080" stroke-width="1" />
<path d="M151 130.6 Q153.6 131 153.6 135" fill="none" stroke="#111" stroke-width="0.8" />
<path d="M152.2 134.6 L153.6 137 L155 134.6Z" fill="#111" stroke="none" stroke-width="1" />
<path d="M190 149 L196.4 149 L193.2 152.4Z" fill="#111" stroke="none" stroke-width="1" />
<path d="M204.4 147.4 L207.4 147.4 M204.8 147.4 L204.8 150.8 M206.9 147.4 L206.9 150.8 M203.4 151 L208.2 151 M205.8 151 L205.8 153.8" fill="none" stroke="#111" stroke-width="0.8" />
<path d="M214.6 147.6 L219.4 152.6 M219.4 147.6 L214.6 152.6" fill="none" stroke="#111" stroke-width="0.95" />
<path d="M14.6 164.6 L19.8 164.6 L22 166.8 L22 173.2 L14.6 173.2Z" fill="#fff" stroke="#222" stroke-width="0.9" />
<path d="M16.2 168 L20.4 168 M16.2 169.8 L20.4 169.8 M16.2 171.6 L20.4 171.6" fill="none" stroke="#555" stroke-width="0.6" />
<path d="M13.4 162.6 L13.4 166.4 M11.5 164.5 L15.3 164.5 M12 163.1 L14.8 165.9 M14.8 163.1 L12 165.9" fill="none" stroke="#e0c000" stroke-width="0.7" />
<path d="M27.6 163.6 L36.6 173 M36.2 163.4 L27.4 173.2" fill="none" stroke="#d01010" stroke-width="1.5" />
<rect x="49.4" y="163.6" width="5.6" height="6.6" fill="#e2e2e2" stroke="#b0b0b0" stroke-width="0.8"/>
<rect x="53" y="166.6" width="5.6" height="6.6" fill="#e8e8e8" stroke="#b0b0b0" stroke-width="0.8"/>
<rect x="64.6" y="164.6" width="8" height="8.4" fill="#c8c8c8" stroke="#aaa" stroke-width="0.8"/>
<rect x="66.8" y="163.4" width="3.6" height="2" fill="#b0b0b0" />
<rect x="68.4" y="167.6" width="5.6" height="5.6" fill="#ececec" stroke="#b0b0b0" stroke-width="0.7"/>
<rect x="85.4" y="166.2" width="9.4" height="7.2" fill="#e8e8e8" stroke="#222" stroke-width="1"/>
<path d="M87 166 L89.4 164 L93 164 L93 166" fill="#d0d0d0" stroke="#222" stroke-width="0.8" />
<rect x="87" y="169.2" width="6" height="2.8" fill="#555" />
<rect x="88" y="169.9" width="1.4" height="1.2" fill="#fff" />
<rect x="90.6" y="169.9" width="1.4" height="1.2" fill="#fff" />
<path d="M93 163.8 L97.2 163.8 L97.2 168 L95.7 166.6 L94.2 167.9 L93.2 166.9 L94.6 165.6Z" fill="#0020e0" stroke="none" stroke-width="1" />
<rect x="2.4" y="178" width="1.2" height="252" fill="#909090" />
<rect x="2.4" y="178" width="218.8" height="1.4" fill="#909090" />
<line x1="11.3" y1="186.8" x2="11.3" y2="402.802" stroke="#b4b4b4" stroke-width="0.8" stroke-dasharray="1 1"/>
<line x1="25" y1="237.62400000000002" x2="25" y2="390.096" stroke="#b4b4b4" stroke-width="0.8" stroke-dasharray="1 1"/>
<line x1="38.3" y1="244.33" x2="38.3" y2="301.154" stroke="#b4b4b4" stroke-width="0.8" stroke-dasharray="1 1"/>
<line x1="11.3" y1="186.8" x2="18.5" y2="186.8" stroke="#b4b4b4" stroke-width="0.8" stroke-dasharray="1 1"/>
<line x1="11.3" y1="199.506" x2="18.5" y2="199.506" stroke="#b4b4b4" stroke-width="0.8" stroke-dasharray="1 1"/>
<line x1="11.3" y1="212.21200000000002" x2="18.5" y2="212.21200000000002" stroke="#b4b4b4" stroke-width="0.8" stroke-dasharray="1 1"/>
<line x1="11.3" y1="224.918" x2="18.5" y2="224.918" stroke="#b4b4b4" stroke-width="0.8" stroke-dasharray="1 1"/>
<line x1="25" y1="237.62400000000002" x2="32.5" y2="237.62400000000002" stroke="#b4b4b4" stroke-width="0.8" stroke-dasharray="1 1"/>
<line x1="38.3" y1="250.33" x2="46.8" y2="250.33" stroke="#b4b4b4" stroke-width="0.8" stroke-dasharray="1 1"/>
<line x1="38.3" y1="263.036" x2="46.8" y2="263.036" stroke="#b4b4b4" stroke-width="0.8" stroke-dasharray="1 1"/>
<line x1="38.3" y1="275.742" x2="46.8" y2="275.742" stroke="#b4b4b4" stroke-width="0.8" stroke-dasharray="1 1"/>
<line x1="38.3" y1="288.448" x2="46.8" y2="288.448" stroke="#b4b4b4" stroke-width="0.8" stroke-dasharray="1 1"/>
<line x1="38.3" y1="301.154" x2="46.8" y2="301.154" stroke="#b4b4b4" stroke-width="0.8" stroke-dasharray="1 1"/>
<line x1="25" y1="313.86" x2="32.5" y2="313.86" stroke="#b4b4b4" stroke-width="0.8" stroke-dasharray="1 1"/>
<line x1="25" y1="326.56600000000003" x2="32.5" y2="326.56600000000003" stroke="#b4b4b4" stroke-width="0.8" stroke-dasharray="1 1"/>
<line x1="25" y1="339.272" x2="32.5" y2="339.272" stroke="#b4b4b4" stroke-width="0.8" stroke-dasharray="1 1"/>
<line x1="25" y1="351.978" x2="32.5" y2="351.978" stroke="#b4b4b4" stroke-width="0.8" stroke-dasharray="1 1"/>
<line x1="25" y1="364.68399999999997" x2="32.5" y2="364.68399999999997" stroke="#b4b4b4" stroke-width="0.8" stroke-dasharray="1 1"/>
<line x1="25" y1="377.39" x2="32.5" y2="377.39" stroke="#b4b4b4" stroke-width="0.8" stroke-dasharray="1 1"/>
<line x1="25" y1="390.096" x2="32.5" y2="390.096" stroke="#b4b4b4" stroke-width="0.8" stroke-dasharray="1 1"/>
<line x1="11.3" y1="402.802" x2="18.5" y2="402.802" stroke="#b4b4b4" stroke-width="0.8" stroke-dasharray="1 1"/>
<rect x="8.3" y="183.8" width="6" height="6" fill="#fff" stroke="#b4b4b4" stroke-width="0.8"/>
<line x1="9.700000000000001" y1="186.8" x2="12.9" y2="186.8" stroke="#4060c8" stroke-width="0.9" />
<line x1="11.3" y1="185.20000000000002" x2="11.3" y2="188.4" stroke="#4060c8" stroke-width="0.9" />
<rect x="8.3" y="196.506" width="6" height="6" fill="#fff" stroke="#b4b4b4" stroke-width="0.8"/>
<line x1="9.700000000000001" y1="199.506" x2="12.9" y2="199.506" stroke="#4060c8" stroke-width="0.9" />
<line x1="11.3" y1="197.906" x2="11.3" y2="201.106" stroke="#4060c8" stroke-width="0.9" />
<rect x="8.3" y="209.21200000000002" width="6" height="6" fill="#fff" stroke="#b4b4b4" stroke-width="0.8"/>
<line x1="9.700000000000001" y1="212.21200000000002" x2="12.9" y2="212.21200000000002" stroke="#4060c8" stroke-width="0.9" />
<line x1="11.3" y1="210.61200000000002" x2="11.3" y2="213.812" stroke="#4060c8" stroke-width="0.9" />
<rect x="8.3" y="399.802" width="6" height="6" fill="#fff" stroke="#b4b4b4" stroke-width="0.8"/>
<line x1="9.700000000000001" y1="402.802" x2="12.9" y2="402.802" stroke="#4060c8" stroke-width="0.9" />
<line x1="11.3" y1="401.202" x2="11.3" y2="404.40200000000004" stroke="#4060c8" stroke-width="0.9" />
<rect x="8.3" y="221.918" width="6" height="6" fill="#fff" stroke="#b4b4b4" stroke-width="0.8"/>
<line x1="9.700000000000001" y1="224.918" x2="12.9" y2="224.918" stroke="#4060c8" stroke-width="0.9" />
<rect x="22" y="234.62400000000002" width="6" height="6" fill="#fff" stroke="#b4b4b4" stroke-width="0.8"/>
<line x1="23.4" y1="237.62400000000002" x2="26.6" y2="237.62400000000002" stroke="#4060c8" stroke-width="0.9" />
<rect x="35.3" y="247.33" width="6" height="6" fill="#fff" stroke="#b4b4b4" stroke-width="0.8"/>
<line x1="36.699999999999996" y1="250.33" x2="39.9" y2="250.33" stroke="#4060c8" stroke-width="0.9" />
<line x1="38.3" y1="248.73000000000002" x2="38.3" y2="251.93" stroke="#4060c8" stroke-width="0.9" />
<rect x="35.3" y="260.036" width="6" height="6" fill="#fff" stroke="#b4b4b4" stroke-width="0.8"/>
<line x1="36.699999999999996" y1="263.036" x2="39.9" y2="263.036" stroke="#4060c8" stroke-width="0.9" />
<line x1="38.3" y1="261.436" x2="38.3" y2="264.636" stroke="#4060c8" stroke-width="0.9" />
<rect x="35.3" y="272.742" width="6" height="6" fill="#fff" stroke="#b4b4b4" stroke-width="0.8"/>
<line x1="36.699999999999996" y1="275.742" x2="39.9" y2="275.742" stroke="#4060c8" stroke-width="0.9" />
<line x1="38.3" y1="274.142" x2="38.3" y2="277.34200000000004" stroke="#4060c8" stroke-width="0.9" />
<rect x="35.3" y="285.448" width="6" height="6" fill="#fff" stroke="#b4b4b4" stroke-width="0.8"/>
<line x1="36.699999999999996" y1="288.448" x2="39.9" y2="288.448" stroke="#4060c8" stroke-width="0.9" />
<line x1="38.3" y1="286.84799999999996" x2="38.3" y2="290.048" stroke="#4060c8" stroke-width="0.9" />
<rect x="35.3" y="298.154" width="6" height="6" fill="#fff" stroke="#b4b4b4" stroke-width="0.8"/>
<line x1="36.699999999999996" y1="301.154" x2="39.9" y2="301.154" stroke="#4060c8" stroke-width="0.9" />
<line x1="38.3" y1="299.554" x2="38.3" y2="302.754" stroke="#4060c8" stroke-width="0.9" />
<rect x="22" y="336.272" width="6" height="6" fill="#fff" stroke="#b4b4b4" stroke-width="0.8"/>
<line x1="23.4" y1="339.272" x2="26.6" y2="339.272" stroke="#4060c8" stroke-width="0.9" />
<line x1="25" y1="337.67199999999997" x2="25" y2="340.872" stroke="#4060c8" stroke-width="0.9" />
<rect x="22" y="387.096" width="6" height="6" fill="#fff" stroke="#b4b4b4" stroke-width="0.8"/>
<line x1="23.4" y1="390.096" x2="26.6" y2="390.096" stroke="#4060c8" stroke-width="0.9" />
<line x1="25" y1="388.496" x2="25" y2="391.696" stroke="#4060c8" stroke-width="0.9" />
<path d="M19 190.5 L23 187.5 L30.2 187.5 L26.2 190.5Z" fill="#fff" stroke="#111" stroke-width="0.8" />
<path d="M19 187.7 L23 184.7 L30.2 184.7 L26.2 187.7Z" fill="#fff" stroke="#111" stroke-width="0.8" />
<path d="M19 184.9 L23 181.9 L30.2 181.9 L26.2 184.9Z" fill="#fff" stroke="#111" stroke-width="0.8" />
<rect x="20.6" y="195.706" width="8" height="6.8" fill="#3a3a3a" stroke="#111" stroke-width="0.8"/>
<line x1="21.6" y1="194.206" x2="21.6" y2="195.706" stroke="#111" stroke-width="0.9" />
<line x1="21.6" y1="202.506" x2="21.6" y2="204.006" stroke="#111" stroke-width="0.9" />
<line x1="23.6" y1="194.206" x2="23.6" y2="195.706" stroke="#111" stroke-width="0.9" />
<line x1="23.6" y1="202.506" x2="23.6" y2="204.006" stroke="#111" stroke-width="0.9" />
<line x1="25.6" y1="194.206" x2="25.6" y2="195.706" stroke="#111" stroke-width="0.9" />
<line x1="25.6" y1="202.506" x2="25.6" y2="204.006" stroke="#111" stroke-width="0.9" />
<line x1="27.6" y1="194.206" x2="27.6" y2="195.706" stroke="#111" stroke-width="0.9" />
<line x1="27.6" y1="202.506" x2="27.6" y2="204.006" stroke="#111" stroke-width="0.9" />
<line x1="19" y1="197.706" x2="20.6" y2="197.706" stroke="#111" stroke-width="0.9" />
<line x1="19" y1="200.506" x2="20.6" y2="200.506" stroke="#111" stroke-width="0.9" />
<line x1="28.6" y1="197.706" x2="30.2" y2="197.706" stroke="#111" stroke-width="0.9" />
<line x1="28.6" y1="200.506" x2="30.2" y2="200.506" stroke="#111" stroke-width="0.9" />
<rect x="20.8" y="208.71200000000002" width="7.6" height="5.8" fill="#fff" stroke="#111" stroke-width="0.9"/>
<line x1="22.6" y1="206.912" x2="22.6" y2="208.71200000000002" stroke="#111" stroke-width="0.9" />
<line x1="22.6" y1="214.512" x2="22.6" y2="216.11200000000002" stroke="#111" stroke-width="0.9" />
<line x1="26.6" y1="206.912" x2="26.6" y2="208.71200000000002" stroke="#111" stroke-width="0.9" />
<line x1="26.6" y1="214.512" x2="26.6" y2="216.11200000000002" stroke="#111" stroke-width="0.9" />
<line x1="19" y1="210.71200000000002" x2="20.8" y2="210.71200000000002" stroke="#111" stroke-width="0.9" />
<line x1="28.4" y1="210.71200000000002" x2="30.2" y2="210.71200000000002" stroke="#111" stroke-width="0.9" />
<line x1="28.4" y1="213.11200000000002" x2="30.2" y2="213.11200000000002" stroke="#111" stroke-width="0.9" />
<path d="M22.7 219.518 Q20.9 222.11800000000002 21.0 224.11800000000002 Q21.0 226.11800000000002 20.099999999999998 227.518" fill="none" stroke="#111" stroke-width="0.75" />
<circle cx="20.2" cy="228.21800000000002" r="1.35" fill="#111" stroke="none" stroke-width="1"/>
<path d="M26.4 219.518 Q24.599999999999998 222.11800000000002 24.7 224.11800000000002 Q24.7 226.11800000000002 23.799999999999997 227.518" fill="none" stroke="#111" stroke-width="0.75" />
<circle cx="23.9" cy="228.21800000000002" r="1.35" fill="#111" stroke="none" stroke-width="1"/>
<path d="M30.099999999999998 219.518 Q28.299999999999997 222.11800000000002 28.4 224.11800000000002 Q28.4 226.11800000000002 27.499999999999996 227.518" fill="none" stroke="#111" stroke-width="0.75" />
<circle cx="27.599999999999998" cy="228.21800000000002" r="1.35" fill="#111" stroke="none" stroke-width="1"/>
<path d="M37.5 233.324 L37.5 239.924 M34.1 239.924 L34.1 236.924 L40.9 236.924 L40.9 239.924 M37.5 234.924 L35.4 236.924" fill="none" stroke="#111" stroke-width="0.9" />
<circle cx="37.5" cy="233.02400000000003" r="1.05" fill="#111" stroke="none" stroke-width="1"/>
<circle cx="34.1" cy="240.52400000000003" r="1.2" fill="#111" stroke="none" stroke-width="1"/>
<circle cx="37.5" cy="240.52400000000003" r="1.2" fill="#111" stroke="none" stroke-width="1"/>
<circle cx="40.9" cy="240.52400000000003" r="1.2" fill="#111" stroke="none" stroke-width="1"/>
<path d="M51.8 246.03 L51.8 252.63 M48.4 252.63 L48.4 249.63 L55.199999999999996 249.63 L55.199999999999996 252.63 M51.8 247.63 L49.699999999999996 249.63" fill="none" stroke="#111" stroke-width="0.9" />
<circle cx="51.8" cy="245.73000000000002" r="1.05" fill="#111" stroke="none" stroke-width="1"/>
<circle cx="48.4" cy="253.23000000000002" r="1.2" fill="#111" stroke="none" stroke-width="1"/>
<circle cx="51.8" cy="253.23000000000002" r="1.2" fill="#111" stroke="none" stroke-width="1"/>
<circle cx="55.199999999999996" cy="253.23000000000002" r="1.2" fill="#111" stroke="none" stroke-width="1"/>
<path d="M51.8 258.73600000000005 L51.8 265.336 M48.4 265.336 L48.4 262.336 L55.199999999999996 262.336 L55.199999999999996 265.336 M51.8 260.336 L49.699999999999996 262.336" fill="none" stroke="#111" stroke-width="0.9" />
<circle cx="51.8" cy="258.43600000000004" r="1.05" fill="#111" stroke="none" stroke-width="1"/>
<circle cx="48.4" cy="265.93600000000004" r="1.2" fill="#111" stroke="none" stroke-width="1"/>
<circle cx="51.8" cy="265.93600000000004" r="1.2" fill="#111" stroke="none" stroke-width="1"/>
<circle cx="55.199999999999996" cy="265.93600000000004" r="1.2" fill="#111" stroke="none" stroke-width="1"/>
<path d="M51.8 271.44200000000006 L51.8 278.04200000000003 M48.4 278.04200000000003 L48.4 275.04200000000003 L55.199999999999996 275.04200000000003 L55.199999999999996 278.04200000000003 M51.8 273.04200000000003 L49.699999999999996 275.04200000000003" fill="none" stroke="#111" stroke-width="0.9" />
<circle cx="51.8" cy="271.14200000000005" r="1.05" fill="#111" stroke="none" stroke-width="1"/>
<circle cx="48.4" cy="278.64200000000005" r="1.2" fill="#111" stroke="none" stroke-width="1"/>
<circle cx="51.8" cy="278.64200000000005" r="1.2" fill="#111" stroke="none" stroke-width="1"/>
<circle cx="55.199999999999996" cy="278.64200000000005" r="1.2" fill="#111" stroke="none" stroke-width="1"/>
<path d="M51.8 284.148 L51.8 290.748 M48.4 290.748 L48.4 287.748 L55.199999999999996 287.748 L55.199999999999996 290.748 M51.8 285.748 L49.699999999999996 287.748" fill="none" stroke="#111" stroke-width="0.9" />
<circle cx="51.8" cy="283.848" r="1.05" fill="#111" stroke="none" stroke-width="1"/>
<circle cx="48.4" cy="291.348" r="1.2" fill="#111" stroke="none" stroke-width="1"/>
<circle cx="51.8" cy="291.348" r="1.2" fill="#111" stroke="none" stroke-width="1"/>
<circle cx="55.199999999999996" cy="291.348" r="1.2" fill="#111" stroke="none" stroke-width="1"/>
<path d="M51.8 296.85400000000004 L51.8 303.454 M48.4 303.454 L48.4 300.454 L55.199999999999996 300.454 L55.199999999999996 303.454 M51.8 298.454 L49.699999999999996 300.454" fill="none" stroke="#111" stroke-width="0.9" />
<circle cx="51.8" cy="296.55400000000003" r="1.05" fill="#111" stroke="none" stroke-width="1"/>
<circle cx="48.4" cy="304.05400000000003" r="1.2" fill="#111" stroke="none" stroke-width="1"/>
<circle cx="51.8" cy="304.05400000000003" r="1.2" fill="#111" stroke="none" stroke-width="1"/>
<circle cx="55.199999999999996" cy="304.05400000000003" r="1.2" fill="#111" stroke="none" stroke-width="1"/>
<path d="M47.6 270.34200000000004 L49 271.742 L47.6 273.142 L46.2 271.742Z" fill="#f01010" stroke="none" stroke-width="1" />
<path d="M34.6 308.65999999999997 L34.6 315.06 M33 308.46 L36.2 308.46 M33 315.26 L36.2 315.26" fill="none" stroke="#1030ff" stroke-width="0.9" />
<path d="M33.4 310.26 L34.6 308.65999999999997 L35.8 310.26Z M33.4 313.46 L34.6 315.06 L35.8 313.46Z" fill="#1030ff" stroke="none" stroke-width="1" />
<path d="M40.3 308.46 Q38.5 311.06 38.6 313.06 Q38.6 315.06 37.7 316.46" fill="none" stroke="#111" stroke-width="0.75" />
<circle cx="37.8" cy="317.15999999999997" r="1.35" fill="#111" stroke="none" stroke-width="1"/>
<path d="M43.9 308.46 Q42.1 311.06 42.2 313.06 Q42.2 315.06 41.300000000000004 316.46" fill="none" stroke="#111" stroke-width="0.75" />
<circle cx="41.4" cy="317.15999999999997" r="1.35" fill="#111" stroke="none" stroke-width="1"/>
<path d="M36.699999999999996 321.166 Q34.9 323.766 35.0 325.766 Q35.0 327.766 34.1 329.166" fill="none" stroke="#111" stroke-width="0.75" />
<circle cx="34.199999999999996" cy="329.866" r="1.35" fill="#111" stroke="none" stroke-width="1"/>
<path d="M40.4 321.166 Q38.6 323.766 38.7 325.766 Q38.7 327.766 37.800000000000004 329.166" fill="none" stroke="#111" stroke-width="0.75" />
<circle cx="37.9" cy="329.866" r="1.35" fill="#111" stroke="none" stroke-width="1"/>
<path d="M44.099999999999994 321.166 Q42.3 323.766 42.4 325.766 Q42.4 327.766 41.5 329.166" fill="none" stroke="#111" stroke-width="0.75" />
<circle cx="41.599999999999994" cy="329.866" r="1.35" fill="#111" stroke="none" stroke-width="1"/>
<path d="M33.6 326.56600000000003 L43.6 323.166" fill="none" stroke="#e8e000" stroke-width="1.2" stroke-dasharray="2 1.4"/>
<path d="M36.699999999999996 333.87199999999996 Q34.9 336.472 35.0 338.472 Q35.0 340.472 34.1 341.87199999999996" fill="none" stroke="#111" stroke-width="0.75" />
<circle cx="34.199999999999996" cy="342.57199999999995" r="1.35" fill="#111" stroke="none" stroke-width="1"/>
<path d="M40.4 333.87199999999996 Q38.6 336.472 38.7 338.472 Q38.7 340.472 37.800000000000004 341.87199999999996" fill="none" stroke="#111" stroke-width="0.75" />
<circle cx="37.9" cy="342.57199999999995" r="1.35" fill="#111" stroke="none" stroke-width="1"/>
<path d="M44.099999999999994 333.87199999999996 Q42.3 336.472 42.4 338.472 Q42.4 340.472 41.5 341.87199999999996" fill="none" stroke="#111" stroke-width="0.75" />
<circle cx="41.599999999999994" cy="342.57199999999995" r="1.35" fill="#111" stroke="none" stroke-width="1"/>
<path d="M35 352.978 L35 350.378 L37.4 350.378 L37.4 347.778 L42 347.778 M36 353.57800000000003 L39.4 353.57800000000003 L39.4 350.978 L42.4 350.978" fill="none" stroke="#111" stroke-width="0.8" />
<line x1="34.4" y1="356.178" x2="42.4" y2="356.178" stroke="#1030ff" stroke-width="0.9" />
<path d="M35.8 354.978 L33.8 356.178 L35.8 357.378Z M41 354.978 L43 356.178 L41 357.378Z" fill="#1030ff" stroke="none" stroke-width="1" />
<path d="M34.4 365.284 L37.4 365.284 L37.4 361.08399999999995 L41.6 361.08399999999995 M34.4 368.284 L37.4 368.284 L37.4 365.284" fill="none" stroke="#111" stroke-width="1" />
<circle cx="34.3" cy="365.284" r="1" fill="#111" stroke="none" stroke-width="1"/>
<circle cx="34.3" cy="368.284" r="1" fill="#111" stroke="none" stroke-width="1"/>
<circle cx="42" cy="361.08399999999995" r="1" fill="#111" stroke="none" stroke-width="1"/>
<rect x="38" y="361.88399999999996" width="1.6" height="5.4" fill="#555" />
<path d="M34.2 380.99 L34.2 373.99 L38.6 373.99" fill="none" stroke="#111" stroke-width="1" />
<circle cx="34.2" cy="381.19" r="1" fill="#111" stroke="none" stroke-width="1"/>
<circle cx="39" cy="373.78999999999996" r="0.9" fill="#111" stroke="none" stroke-width="1"/>
<path d="M36.4 380.78999999999996 L38.8 376.78999999999996 L44.2 376.78999999999996 L41.8 380.78999999999996Z" fill="#ddd" stroke="#111" stroke-width="0.8" />
<path d="M37.6 378.99 L43 378.99" fill="none" stroke="#111" stroke-width="0.7" />
<line x1="34.4" y1="393.29600000000005" x2="42.2" y2="386.096" stroke="#0a5050" stroke-width="1.6" />
<circle cx="34.2" cy="393.49600000000004" r="0.9" fill="#111" stroke="none" stroke-width="1"/>
<circle cx="42.4" cy="385.896" r="0.9" fill="#111" stroke="none" stroke-width="1"/>
<ellipse cx="24.8" cy="405.802" rx="4.6" ry="1.7" fill="#d8d8d8" stroke="#222" stroke-width="0.8"/>
<ellipse cx="24.8" cy="403.40200000000004" rx="4.6" ry="1.7" fill="#d8d8d8" stroke="#222" stroke-width="0.8"/>
<ellipse cx="24.8" cy="401.002" rx="4.6" ry="1.7" fill="#d8d8d8" stroke="#222" stroke-width="0.8"/>
<ellipse cx="24.8" cy="398.60200000000003" rx="4.6" ry="1.7" fill="#d8d8d8" stroke="#222" stroke-width="0.8"/>
</svg>
</body></html>
